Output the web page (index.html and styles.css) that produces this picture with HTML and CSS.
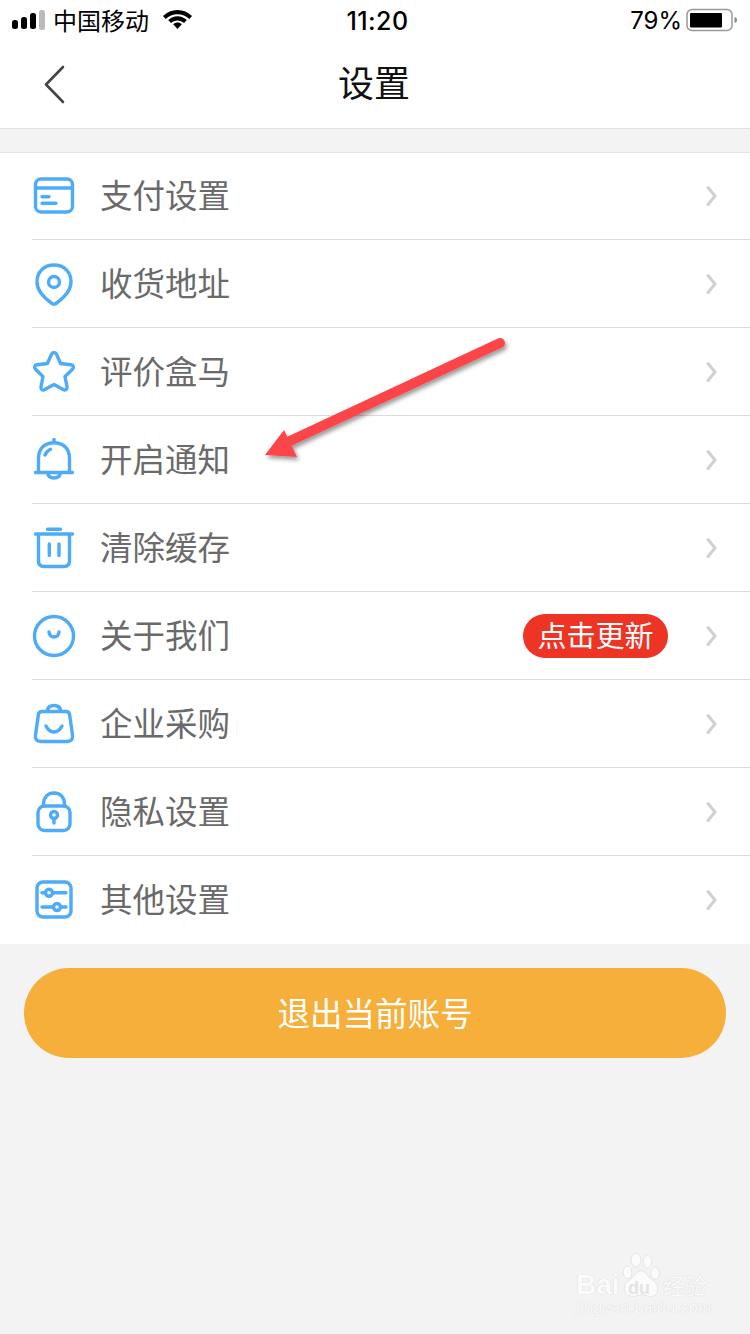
FILE: index.html
```html
<!DOCTYPE html>
<html lang="zh">
<head>
<meta charset="utf-8">
<title>设置</title>
<link rel="stylesheet" href="styles.css">
</head>
<body>
<div class="page">
  <header class="status">
    <div class="status-left">
      <svg class="signal" width="34" height="22" viewBox="0 0 34 22"><rect x="0" y="11" width="6" height="9" rx="2.500" fill="#000"/><rect x="9" y="8" width="6" height="12" rx="2.500" fill="#000"/><rect x="18" y="4" width="6" height="16" rx="2.500" fill="#000"/><rect x="27" y="1" width="6" height="20" rx="2.500" fill="#bbb"/></svg>
      <span class="carrier">中国移动</span>
      <svg class="wifi" width="29" height="20" viewBox="0 0 29 20"><path d="M14.500 0C9 0 4 2.200 0 6L2.700 9C5.800 6 10 4.200 14.500 4.200S23.200 6 26.300 9L29 6C25 2.200 20 0 14.500 0Z" fill="#000"/><path d="M14.500 6.200C11 6.200 7.800 7.500 5.200 10L8 13C9.800 11.300 12 10.400 14.500 10.400S19.200 11.300 21 13L23.800 10C21.200 7.500 18 6.200 14.500 6.200Z" fill="#000"/><path d="M14.500 12.500C12.800 12.500 11.300 13.100 10.200 14.200L14.500 19L18.800 14.200C17.700 13.100 16.200 12.500 14.500 12.500Z" fill="#000"/></svg>
    </div>
    <div class="time">11:20</div>
    <div class="status-right">
      <span class="pct">79%</span>
      <svg width="54" height="24" viewBox="0 0 54 24"><rect x="1" y="1.500" width="45" height="21" rx="5" fill="#fff" stroke="#999" stroke-width="1.500"/><rect x="4" y="5" width="32" height="14.500" rx="1" fill="#000"/><path d="M48.500 9c2 .5 2.500 1.500 2.500 3s-.5 2.500-2.500 3z" fill="#888"/></svg>
    </div>
  </header>

  <nav class="navbar">
    <svg class="back" width="24" height="40" viewBox="0 0 24 40"><path d="M21 3L4 20.500L21 38" fill="none" stroke="#444" stroke-width="2.600" stroke-linecap="round" stroke-linejoin="round"/></svg>
    <h1 class="title">设置</h1>
  </nav>

  <ul class="list">
    <li class="row">
      <svg class="icon" width="44" height="44" viewBox="0 0 44 44"><rect x="3.500" y="5" width="37" height="33" rx="5.500"/><path d="M3.500 14H40.500M10 22.700H17M10 29.300H24"/></svg>
      <span class="label">支付设置</span>
      <svg class="chev" width="14" height="24" viewBox="0 0 14 24"><path d="M4 3.500L11 12L4 20.500"/></svg>
    </li>
    <li class="row">
      <svg class="icon" width="44" height="44" viewBox="0 0 44 44"><path d="M22 3C11.500 3 5 10.500 5 20C5 28.500 13 36.500 20 41.500C21.300 42.300 22.700 42.300 24 41.500C31 36.500 39 28.500 39 20C39 10.500 32.500 3 22 3Z"/><circle cx="22" cy="20" r="5.500"/></svg>
      <span class="label">收货地址</span>
      <svg class="chev" width="14" height="24" viewBox="0 0 14 24"><path d="M4 3.500L11 12L4 20.500"/></svg>
    </li>
    <li class="row">
      <svg class="icon" width="44" height="44" viewBox="0 0 44 44"><path d="M22 2.500C23 2.500 24 3.200 24.500 4.300L28.600 13.500L38.800 14.800C41.500 15.100 42.300 17.500 40.500 19.300L33 26.500L35 36.800C35.500 39.500 33.400 40.800 31.200 39.600L22 34.500L12.800 39.600C10.600 40.800 8.500 39.500 9 36.800L11 26.500L3.500 19.300C1.700 17.500 2.500 15.100 5.200 14.800L15.400 13.500L19.500 4.300C20 3.200 21 2.500 22 2.500Z"/></svg>
      <span class="label">评价盒马</span>
      <svg class="chev" width="14" height="24" viewBox="0 0 14 24"><path d="M4 3.500L11 12L4 20.500"/></svg>
    </li>
    <li class="row">
      <svg class="icon" width="44" height="44" viewBox="0 0 44 44"><path d="M6.500 34.500V20C6.500 10.500 13 4.700 22 4.700S37.500 10.500 37.500 20V34.500M3.500 34.500H40.500M22 1.500V4.700M15.500 34.500C16 38.500 18.500 40 22 40S28 38.500 28.500 34.500M13 17C14 14.500 15.800 12.500 18.500 11.300"/></svg>
      <span class="label">开启通知</span>
      <svg class="chev" width="14" height="24" viewBox="0 0 14 24"><path d="M4 3.500L11 12L4 20.500"/></svg>
    </li>
    <li class="row">
      <svg class="icon" width="44" height="44" viewBox="0 0 44 44"><path d="M3.500 8H40.500M6.500 8V35C6.500 38.500 8.500 40.500 12 40.500H32C35.500 40.500 37.500 38.500 37.500 35V8M15.500 3.300H28.500M17.300 18V29.500M27 18V29.500"/></svg>
      <span class="label">清除缓存</span>
      <svg class="chev" width="14" height="24" viewBox="0 0 14 24"><path d="M4 3.500L11 12L4 20.500"/></svg>
    </li>
    <li class="row">
      <svg class="icon" width="44" height="44" viewBox="0 0 44 44"><circle cx="22" cy="22" r="19.500"/><path d="M17 18C17.500 21.500 19.200 23 22 23S26.500 21.500 27 18"/></svg>
      <span class="label">关于我们</span>
      <span class="badge">点击更新</span>
      <svg class="chev" width="14" height="24" viewBox="0 0 14 24"><path d="M4 3.500L11 12L4 20.500"/></svg>
    </li>
    <li class="row">
      <svg class="icon" width="44" height="44" viewBox="0 0 44 44"><path d="M10 9.500H34C36 9.500 37.200 10.500 37.600 12.500L40.500 33C41.300 37.500 39 39.500 35 39.500H9C5 39.500 2.700 37.500 3.500 33L6.400 12.500C6.800 10.500 8 9.500 10 9.500ZM15 9.500C15.500 5.500 18 3.500 22 3.500S28.500 5.500 29 9.500M14 24C16 28 18.500 30 22 30S28 28 30 24"/></svg>
      <span class="label">企业采购</span>
      <svg class="chev" width="14" height="24" viewBox="0 0 14 24"><path d="M4 3.500L11 12L4 20.500"/></svg>
    </li>
    <li class="row">
      <svg class="icon" width="44" height="44" viewBox="0 0 44 44"><rect x="6" y="16" width="32" height="24.500" rx="6.500"/><path d="M11.500 16V14C11.500 7 16 3 22 3S32.500 7 32.500 14V16M22 29V33"/><circle cx="22" cy="25" r="3.500"/></svg>
      <span class="label">隐私设置</span>
      <svg class="chev" width="14" height="24" viewBox="0 0 14 24"><path d="M4 3.500L11 12L4 20.500"/></svg>
    </li>
    <li class="row">
      <svg class="icon" width="44" height="44" viewBox="0 0 44 44"><rect x="5" y="4" width="34" height="35" rx="6"/><path d="M10 14.700H13.500M20.500 14.700H34M10 29H21.500M28.500 29H34"/><circle cx="17" cy="14.700" r="3.500"/><circle cx="25" cy="29" r="3.500"/></svg>
      <span class="label">其他设置</span>
      <svg class="chev" width="14" height="24" viewBox="0 0 14 24"><path d="M4 3.500L11 12L4 20.500"/></svg>
    </li>
  </ul>

  <div class="actions">
    <button class="logout" type="button">退出当前账号</button>
  </div>

  <svg class="arrow" width="270" height="140" viewBox="0 0 270 140">
    <defs><filter id="ds" x="-10%" y="-20%" width="120%" height="140%"><feDropShadow dx="2" dy="3" stdDeviation="2" flood-color="#000" flood-opacity=".4"/></filter></defs>
    <g filter="url(#ds)"><path d="M250 13L40 111" fill="none" stroke="#fb4548" stroke-width="10" stroke-linecap="round"/><path d="M34 100L15 125L47 127Z" fill="#fb4548"/></g>
  </svg>

  <div class="watermark">
    <div class="wm-top">
      <span class="wm-bai">Bai</span>
      <svg class="wm-paw" width="40" height="45" viewBox="0 0 56 56" preserveAspectRatio="none"><g fill="#fbfbfb" stroke="#e2e2e2" stroke-width="1.200"><ellipse cx="9" cy="24" rx="6" ry="8"/><ellipse cx="21" cy="9" rx="7" ry="8.500"/><ellipse cx="37" cy="11" rx="6" ry="8"/><ellipse cx="48" cy="25" rx="6" ry="7.500"/><path d="M28 22C20 22 19 31 10 35C2 38 2 54 17 54C22 54 25 52 29 52C34 52 36 54 41 54C54 54 54 39 46 35C37 31 36 22 28 22Z"/></g></svg>
      <span class="wm-du">du</span>
      <span class="wm-cn">经验</span>
    </div>
    <div class="wm-url">jingyan.baidu.com</div>
  </div>
</div>
</body>
</html>
```
FILE: styles.css
```css
* { box-sizing: border-box; }
html, body { margin: 0; padding: 0; }
body {
  width: 750px;
  height: 1334px;
  overflow: hidden;
  background: #f3f3f3;
  font-family: "Noto Sans CJK SC", "Noto Sans", sans-serif;
}
.page { position: relative; width: 750px; height: 1334px; }

.status {
  height: 40px;
  background: #fff;
  display: grid;
  grid-template-columns: 1fr auto 1fr;
  align-items: center;
  padding: 0 12px;
  color: #000;
}
.status-left { display: flex; align-items: center; }
.status-right { display: flex; align-items: center; justify-content: flex-end; gap: 4px; margin-right: -2px; }
.signal { margin-right: 7px; }
.carrier { font-size: 24px; line-height: 40px; }
.wifi { margin-left: 14px; }
.time { font-family: Inter, Roboto, sans-serif; font-size: 25px; font-weight: 500; letter-spacing: .4px; margin: 2px 0 0 5px; }
.pct { font-family: Inter, Roboto, sans-serif; font-size: 24px; font-weight: 400; }

.navbar {
  height: 89px;
  background: #fff;
  border-bottom: 1px solid #e2e2e2;
  display: flex;
  align-items: center;
  justify-content: center;
  position: relative;
}
.back { position: absolute; left: 42px; top: 24px; }
.title { margin: 0 2px 6px 0; font-size: 36px; font-weight: 400; color: #111; line-height: 1; }

.list {
  list-style: none;
  margin: 23px 0 0;
  padding: 0 0 0 32px;
  background: #fff;
  border-top: 1px solid #e4e4e4;
}
.row {
  height: 88px;
  display: flex;
  align-items: center;
  border-bottom: 1px solid #dcdcdc;
  padding-right: 32px;
}
.row:first-child { height: 87px; }
.row:last-child { border-bottom: 0; }
.icon {
  flex: none;
  fill: none;
  stroke: #4dabf7;
  stroke-width: 3.400;
  stroke-linecap: round;
  stroke-linejoin: round;
}
.label { font-size: 32.500px; color: #6a6a6a; margin-left: 24px; flex: 1; line-height: 1; padding-bottom: 3px; }
.chev { flex: none; fill: none; stroke: #d0d0d0; stroke-width: 3; stroke-linecap: round; stroke-linejoin: round; }
.badge {
  flex: none;
  width: 145px;
  height: 44px;
  margin-right: 36px;
  border-radius: 22px;
  background: #ee3424;
  color: #fff;
  font-size: 29px;
  line-height: 41px;
  text-align: center;
}

.actions { padding: 24px 24px 0; }
.logout {
  display: block;
  width: 100%;
  height: 90px;
  border: 0;
  border-radius: 45px;
  padding: 0 0 4px;
  background: #f5af3a;
  color: #fff;
  font-family: inherit;
  font-size: 32.500px;
}

.arrow { position: absolute; left: 250px; top: 330px; }

.watermark {
  position: absolute;
  left: 576px;
  top: 1252px;
  width: 136px;
  color: #fbfbfb;
  text-shadow: 0 0 1px #c8c8c8;
}
.wm-top { display: flex; align-items: flex-end; height: 46px; position: relative; }
.wm-bai { font-family: "Liberation Sans", sans-serif; font-weight: 700; font-size: 28px; line-height: 32px; margin-bottom: -3px; }
.wm-paw { position: absolute; left: 45px; top: 1px; }
.wm-du { position: absolute; left: 52px; top: 24px; font-family: "Liberation Sans", sans-serif; font-size: 18px; font-weight: 700; color: #e4e4e4; text-shadow: none; line-height: 24px; }
.wm-cn { position: absolute; left: 87px; top: 18px; font-size: 22px; line-height: 28px; }
.wm-url { font-family: "Liberation Sans", sans-serif; font-size: 16px; line-height: 20px; letter-spacing: .4px; white-space: nowrap; }
```
